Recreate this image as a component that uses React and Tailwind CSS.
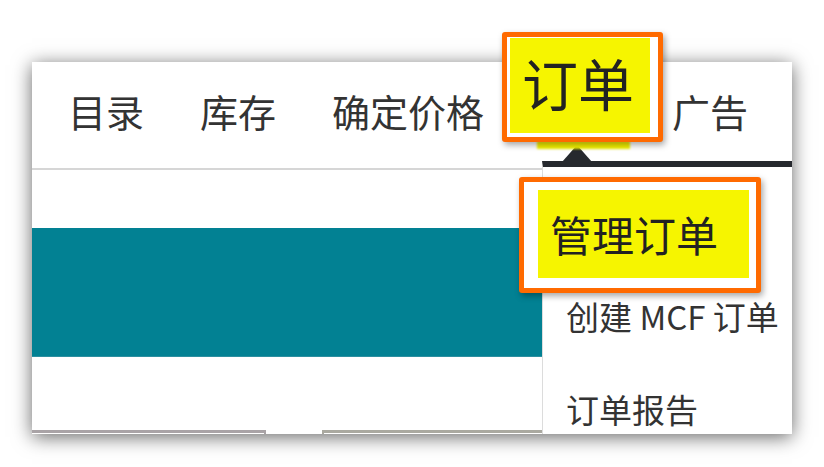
import React from "react";

const NAV = ["目录", "库存", "确定价格", "订单", "广告"];
const MENU = ["管理订单", "创建 MCF 订单", "订单报告"];

const font = { fontFamily: '"Noto Sans CJK SC", "Noto Sans", sans-serif' };

export default function App() {
  return (
    <div className="relative w-[824px] h-[467px] bg-white overflow-hidden pl-[32px] pt-[62px]" style={font}>
      {/* page card */}
      <div className="relative w-[760px] h-[372px] bg-white overflow-hidden shadow-[0_3px_18px_rgba(0,0,0,0.6)]">
        {/* top nav */}
        <div className="h-[108px] border-b-2 border-[#d6d6d6] flex items-start pl-[36px] pt-[25px] gap-[56px] text-[38px] leading-[48px] text-[#333]">
          {NAV.map((n) => (
            <span key={n} className={n === "订单" ? "invisible" : ""}>
              {n}
            </span>
          ))}
        </div>
        <div className="h-[58px]" />
        <div className="h-[129px] bg-[#028193] border-b border-[#2c8fa0]" />
        <div className="h-[73px]" />
        <div className="flex gap-[56px]">
          <div className="w-[234px] h-[40px] border-t-[3px] border-r-2 border-[#a9a3a6]" />
          <div className="w-[220px] h-[40px] border-t-[3px] border-l-2 border-[#aaa9a0]" />
        </div>

        {/* dropdown menu */}
        <div className="absolute left-[510px] top-[99px] w-[250px] bottom-0 bg-white border-t-[6px] border-[#26292e] border-l border-l-[#dcdcdc]">
          <div className="pt-[10px] pl-[23px] text-[33px] text-[#333]">
            {MENU.map((m, i) => (
              <div key={m} className={`h-[93px] flex items-center whitespace-nowrap ${i === 0 ? "invisible" : ""}`}>
                {m}
              </div>
            ))}
          </div>
        </div>
      </div>

      {/* caret above the dropdown */}
      <svg className="absolute left-[561px] top-[144px]" width="32" height="18" viewBox="0 0 32 18">
        <path d="M16 1 L31 18 L1 18 Z" fill="#26292e" />
      </svg>

      {/* yellow spill under the 订单 marker */}
      <div className="absolute left-[537px] top-[141px] w-[93px] h-[8px] bg-[#f4f200] blur-[1px]" />

      {/* annotation: 订单 */}
      <div className="absolute left-[502px] top-[32px] w-[161px] h-[110px] border-[5px] border-[#ff6a00] rounded-[3px] bg-white shadow-[2px_3px_6px_rgba(0,0,0,0.35)] pl-[3px] pr-[8px] pt-[1px] pb-[4px]">
        <div className="w-full h-full bg-[#f6f500] flex items-center justify-center text-[56px] leading-none text-[#222] pb-[8px] pr-[4px]">
          订单
        </div>
      </div>

      {/* annotation: 管理订单 */}
      <div className="absolute left-[519px] top-[177px] w-[242px] h-[116px] border-[5px] border-[#ff6a00] rounded-[3px] bg-white shadow-[2px_3px_6px_rgba(0,0,0,0.35)] pl-[14px] pr-[7px] pt-[8px] pb-[10px]">
        <div className="w-full h-full bg-[#f6f500] flex items-center pl-[12px] text-[42px] leading-none text-[#222]">
          管理订单
        </div>
      </div>
    </div>
  );
}
